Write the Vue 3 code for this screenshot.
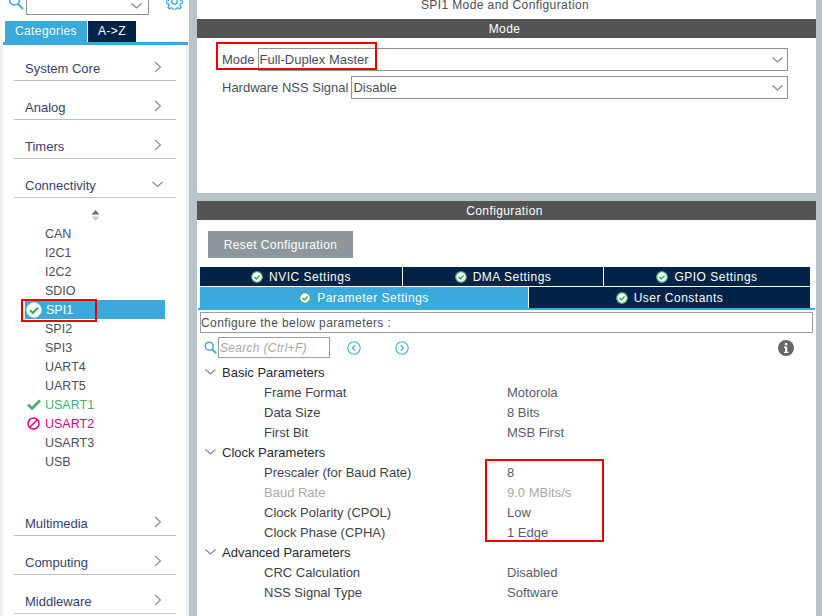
<script setup>
const topCats = ['System Core', 'Analog', 'Timers']
const bottomCats = ['Multimedia', 'Computing', 'Middleware']
const items = [
  { name: 'CAN' }, { name: 'I2C1' }, { name: 'I2C2' }, { name: 'SDIO' },
  { name: 'SPI1', state: 'active' }, { name: 'SPI2' }, { name: 'SPI3' },
  { name: 'UART4' }, { name: 'UART5' }, { name: 'USART1', state: 'ok' },
  { name: 'USART2', state: 'blocked' }, { name: 'USART3' }, { name: 'USB' }
]
const tabsTop = ['NVIC Settings', 'DMA Settings', 'GPIO Settings']
const groups = [
  { title: 'Basic Parameters', rows: [
    ['Frame Format', 'Motorola'], ['Data Size', '8 Bits'], ['First Bit', 'MSB First']
  ] },
  { title: 'Clock Parameters', rows: [
    ['Prescaler (for Baud Rate)', '8'], ['Baud Rate', '9.0 MBits/s', true],
    ['Clock Polarity (CPOL)', 'Low'], ['Clock Phase (CPHA)', '1 Edge']
  ] },
  { title: 'Advanced Parameters', rows: [
    ['CRC Calculation', 'Disabled'], ['NSS Signal Type', 'Software']
  ] }
]
</script>

<template>
  <div class="app">
    <aside class="side">
      <div class="side-top">
        <svg class="s-ico" width="16" height="16" viewBox="0 0 16 16"><circle cx="6.5" cy="6" r="5" fill="none" stroke="#3ea9dc" stroke-width="1.6"/><path d="M10 10l5 5" stroke="#3ea9dc" stroke-width="2"/></svg>
        <div class="side-select">
          <svg width="11" height="6" viewBox="0 0 11 6"><path d="M.5.5l5 4.5 5-4.5" fill="none" stroke="#7d858a" stroke-width="1.2"/></svg>
        </div>
        <svg class="gear" width="17" height="17" viewBox="0 0 24 24"><path d="M10.5 1.5h3l.7 3 2.3 1 2.6-1.6 2.1 2.1-1.6 2.6 1 2.3 3 .7v3l-3 .7-1 2.3 1.6 2.6-2.1 2.1-2.6-1.6-2.3 1-.7 3h-3l-.7-3-2.3-1-2.6 1.6-2.1-2.1 1.6-2.6-1-2.3-3-.7v-3l3-.7 1-2.3-1.6-2.6 2.1-2.1 2.6 1.6 2.3-1z" fill="none" stroke="#3ea9dc" stroke-width="1.9"/><circle cx="12" cy="12" r="3.8" fill="none" stroke="#3ea9dc" stroke-width="1.9"/></svg>
      </div>
      <div class="side-tabs">
        <div class="stab on">Categories</div>
        <div class="stab">A-&gt;Z</div>
      </div>
      <div class="side-body">
        <div v-for="c in topCats" :key="c" class="cat">
          <span>{{ c }}</span>
          <svg class="chev" width="8" height="12" viewBox="0 0 8 12"><path d="M1 1l5.5 5L1 11" fill="none" stroke="#858b90" stroke-width="1.1"/></svg>
        </div>
        <div class="cat">
          <span>Connectivity</span>
          <svg class="chev-d" width="11" height="7" viewBox="0 0 11 7"><path d="M.5 1l5 4.5 5-4.5" fill="none" stroke="#858b90" stroke-width="1.1"/></svg>
        </div>
        <div class="sort">
          <svg width="9" height="11" viewBox="0 0 9 11"><path d="M4.5 0L8.5 4.5H.5z" fill="#666c70"/><path d="M4.5 11L8.5 6.5H.5z" fill="#c9cdd0"/></svg>
        </div>
        <ul class="items">
          <li v-for="i in items" :key="i.name" class="item" :class="i.state">
            <span class="mark">
              <svg v-if="i.state === 'active'" width="16" height="16" viewBox="0 0 18 18"><circle cx="9" cy="9" r="8.4" fill="#fff" stroke="#bfe3cd"/><path d="M4.5 9.2l3.2 3.2 5.8-6" fill="none" stroke="#36a768" stroke-width="2.4"/></svg>
              <svg v-else-if="i.state === 'ok'" width="14" height="11" viewBox="0 0 14 11"><path d="M1 5.5l4 4 8-8" fill="none" stroke="#45ad72" stroke-width="2.6"/></svg>
              <svg v-else-if="i.state === 'blocked'" width="13" height="13" viewBox="0 0 13 13"><circle cx="6.5" cy="6.5" r="5.5" fill="none" stroke="#e6007e" stroke-width="1.5"/><path d="M2.8 10.2l7.4-7.4" stroke="#e6007e" stroke-width="1.5"/></svg>
            </span>
            <span class="iname">{{ i.name }}</span>
          </li>
        </ul>
        <div v-for="c in bottomCats" :key="c" class="cat">
          <span>{{ c }}</span>
          <svg class="chev" width="8" height="12" viewBox="0 0 8 12"><path d="M1 1l5.5 5L1 11" fill="none" stroke="#858b90" stroke-width="1.1"/></svg>
        </div>
      </div>
    </aside>

    <main class="main">
      <section class="mode">
        <div class="title">SPI1 Mode and Configuration</div>
        <div class="bar">Mode</div>
        <div class="form">
          <label class="frow">
            <span>Mode</span>
            <div class="sel">Full-Duplex Master
              <svg width="11" height="6" viewBox="0 0 11 6"><path d="M.5.5l5 4.5 5-4.5" fill="none" stroke="#7d858a" stroke-width="1.2"/></svg>
            </div>
          </label>
          <label class="frow">
            <span>Hardware NSS Signal</span>
            <div class="sel">Disable
              <svg width="11" height="6" viewBox="0 0 11 6"><path d="M.5.5l5 4.5 5-4.5" fill="none" stroke="#7d858a" stroke-width="1.2"/></svg>
            </div>
          </label>
        </div>
      </section>

      <section class="config">
        <div class="bar">Configuration</div>
        <button class="reset">Reset Configuration</button>
        <div class="tabs">
          <div class="trow three">
            <div v-for="t in tabsTop" :key="t" class="tab">
              <svg width="12" height="12" viewBox="0 0 12 12"><circle cx="6" cy="6" r="5.3" fill="#fff" stroke="#45ad72" stroke-width="1.2"/><path d="M3.4 6l1.9 1.9 3.3-3.4" fill="none" stroke="#36a768" stroke-width="1.5"/></svg>
              {{ t }}
            </div>
          </div>
          <div class="trow two">
            <div class="tab blue">
              <svg width="12" height="12" viewBox="0 0 12 12"><circle cx="6" cy="6" r="5.3" fill="#fff" stroke="#45ad72" stroke-width="1.2"/><path d="M3.4 6l1.9 1.9 3.3-3.4" fill="none" stroke="#36a768" stroke-width="1.5"/></svg>
              Parameter Settings
            </div>
            <div class="tab">
              <svg width="12" height="12" viewBox="0 0 12 12"><circle cx="6" cy="6" r="5.3" fill="#fff" stroke="#45ad72" stroke-width="1.2"/><path d="M3.4 6l1.9 1.9 3.3-3.4" fill="none" stroke="#36a768" stroke-width="1.5"/></svg>
              User Constants
            </div>
          </div>
        </div>
        <div class="pbody">
          <div class="hint">Configure the below parameters :</div>
          <div class="searchrow">
            <svg width="13" height="13" viewBox="0 0 13 13"><circle cx="5.2" cy="5.2" r="4" fill="none" stroke="#3ea9dc" stroke-width="1.5"/><path d="M8 8l4.3 4.3" stroke="#3ea9dc" stroke-width="1.8"/></svg>
            <div class="search">Search (Ctrl+F)</div>
            <svg class="nav-a" width="14" height="14" viewBox="0 0 14 14"><circle cx="7" cy="7" r="6.2" fill="none" stroke="#3ea9dc" stroke-width="1.1"/><path d="M8.2 4.2L5.4 7l2.8 2.8" fill="none" stroke="#3ea9dc" stroke-width="1.2"/></svg>
            <svg class="nav-b" width="14" height="14" viewBox="0 0 14 14"><circle cx="7" cy="7" r="6.2" fill="none" stroke="#3ea9dc" stroke-width="1.1"/><path d="M5.8 4.2L8.6 7l-2.8 2.8" fill="none" stroke="#3ea9dc" stroke-width="1.2"/></svg>
            <svg class="info" width="16" height="16" viewBox="0 0 16 16"><circle cx="8" cy="8" r="8" fill="#666"/><rect x="6.9" y="3" width="2.4" height="2.3" fill="#fff"/><path d="M6 6.6h3.2v5.2H10.4v1.3H6v-1.3h1v-3.9H6z" fill="#fff"/></svg>
          </div>
          <div class="tree">
            <template v-for="g in groups" :key="g.title">
              <div class="ghead">
                <svg width="11" height="6" viewBox="0 0 11 6"><path d="M.5.5l5 4.5 5-4.5" fill="none" stroke="#7d858a" stroke-width="1.1"/></svg>
                <span>{{ g.title }}</span>
              </div>
              <div v-for="r in g.rows" :key="r[0]" class="prow" :class="{ off: r[2] }">
                <span class="pname">{{ r[0] }}</span>
                <span class="pval">{{ r[1] }}</span>
              </div>
            </template>
          </div>
        </div>
      </section>
    </main>

    <div class="mark-box box-spi"></div>
    <div class="mark-box box-mode"></div>
    <div class="mark-box box-params"></div>
  </div>
</template>

<style scoped>
.app {
  position: relative;
  display: flex;
  width: 822px;
  height: 616px;
  overflow: hidden;
  background: #b8c4cc;
  font-family: "Liberation Sans", Arial, sans-serif;
  font-size: 13px;
  color: #4a4a55;
}

/* Sidebar */
.side {
  width: 189px;
  flex: none;
  background: #fff;
  display: flex;
  flex-direction: column;
}
.side-top {
  height: 21px;
  display: flex;
  align-items: flex-start;
  flex: none;
}
.s-ico { margin: -6px 0 0 8px; flex: none; }
.side-select {
  width: 123px;
  height: 15px;
  margin-left: 2px;
  box-sizing: border-box;
  border: 1px solid #8d9499;
  border-top: none;
  display: flex;
  justify-content: flex-end;
  padding: 3px 6px 0 0;
  flex: none;
}
.side-select svg { display: block; }
.gear { margin: -7px 0 0 17px; flex: none; }
.side-tabs {
  height: 24px;
  box-sizing: border-box;
  margin-left: 3px;
  padding-left: 2px;
  border-bottom: 3px solid #3aa9dc;
  margin-right: 1px;
  display: flex;
  gap: 1px;
  flex: none;
}
.stab {
  width: 48px;
  height: 21px;
  background: #012348;
  color: #fff;
  font-size: 12px;
  letter-spacing: 0.4px;
  line-height: 21px;
  text-align: center;
}
.stab.on { width: 82px; background: #3aa9dc; }
.side-body {
  flex: 1;
  background: #fff;
  border-left: 3px solid #eff1f2;
  border-right: 3px solid #eff1f2;
  padding: 0 10px 0 11px;
  min-height: 0;
}
.cat {
  padding-top: 3px;
  box-sizing: content-box;
  border-bottom: 1px solid #b9c3ca;
  height: 35px;
  display: flex;
  justify-content: space-between;
  align-items: flex-end;
  color: #39406b;
  font-size: 13px;
}
.side-body > .cat:first-child { margin-top: -3px; }
.cat span { padding-bottom: 3px; line-height: 16px; margin-left: 11px; }
.chev { margin: 0 14px 7px 0; }
.chev-d { margin: 0 13px 9px 0; }
.sort {
  height: 26px;
  display: flex;
  justify-content: center;
  align-items: center;
  padding-top: 11px;
  box-sizing: border-box;
  width: 162px;
}
.sort svg { margin-top: -2px; }
.items {
  list-style: none;
  margin: 0 0 26px;
  padding: 0;
}
.item {
  height: 19px;
  line-height: 19px;
  margin-left: 11px;
  width: 140px;
  display: flex;
  align-items: center;
  font-size: 12.5px;
  color: #4d4d57;
}
.iname { padding-top: 1px; }
.mark {
  width: 17px;
  margin-right: 3px;
  flex: none;
  display: flex;
  justify-content: center;
  align-items: center;
  height: 19px;
}
.mark svg { flex: none; }
.item.active { background: #3aa9dc; color: #fff; }
.item.active .iname { margin-left: 1px; }
.item.ok { color: #45ad72; }
.item.blocked { color: #e6007e; }

/* Main */
.main {
  margin-left: 8px;
  width: 619px;
  flex: none;
  display: flex;
  flex-direction: column;
  gap: 8px;
}
.mode {
  height: 193px;
  background: #fff;
  flex: none;
}
.title {
  height: 19px;
  line-height: 10px;
  text-align: center;
  font-size: 12px;
  letter-spacing: 0.4px;
  color: #4d4d57;
  padding-right: 3px;
  box-sizing: border-box;
}
.bar {
  height: 19px;
  box-sizing: border-box;
  background: #535453;
  color: #fff;
  font-size: 12px;
  letter-spacing: 0.4px;
  padding: 1px 4px 0 0;
  line-height: 19px;
  text-align: center;
}
.form {
  padding: 10px 28px 0 25px;
  display: flex;
  flex-direction: column;
  gap: 5px;
}
.frow {
  display: flex;
  align-items: center;
  gap: 3px;
  height: 23px;
  color: #4d4d57;
}
.sel {
  flex: 1;
  height: 23px;
  box-sizing: border-box;
  border: 1px solid #8d9499;
  line-height: 21px;
  padding: 0 4px 0 1px;
  display: flex;
  justify-content: space-between;
  align-items: center;
}
.config {
  flex: 1;
  background: #fff;
  min-height: 0;
}
.reset {
  display: block;
  margin: 11px 0 9px 11px;
  width: 145px;
  height: 27px;
  border: none;
  background: #8f979c;
  color: #fff;
  font: 12px "Liberation Sans", Arial, sans-serif;
  letter-spacing: 0.4px;
}
.tabs {
  margin: 0 6px 0 3px;
  display: flex;
  flex-direction: column;
  gap: 1px;
}
.trow { display: grid; gap: 1px; }
.three { grid-template-columns: 202px 200px 1fr; height: 19px; }
.two { grid-template-columns: 328px 1fr; height: 21px; }
.tab {
  background: #012348;
  color: #fff;
  font-size: 12px;
  letter-spacing: 0.5px;
  display: flex;
  align-items: center;
  justify-content: center;
  gap: 6px;
}
.tab.blue { background: #3aa9dc; }
.pbody {
  border-top: 2px solid #3aa9dc;
  margin: 0 1px;
  padding: 2px 2px 0;
  height: 306px;
  box-sizing: border-box;
}
.hint {
  height: 21px;
  box-sizing: border-box;
  border: 1px solid #9a9fa3;
  font-size: 12px;
  letter-spacing: 0.4px;
  line-height: 20px;
  color: #4d4d57;
  white-space: nowrap;
}
.searchrow {
  display: flex;
  align-items: center;
  height: 21px;
  margin-top: 4px;
  padding-left: 4px;
}
.search {
  width: 112px;
  height: 21px;
  box-sizing: border-box;
  margin-left: 1px;
  border: 1px solid #9a9fa3;
  font-style: italic;
  font-size: 12px;
  letter-spacing: 0.3px;
  color: #a8a8a8;
  line-height: 20px;
  padding-left: 1px;
}
.nav-a { margin-left: 17px; }
.nav-b { margin-left: 34px; }
.info { margin-left: 369px; }
.tree { margin-top: 4px; }
.ghead {
  height: 20px;
  display: flex;
  align-items: center;
  padding-left: 5px;
  gap: 6px;
  color: #2a2a33;
}
.prow {
  height: 20px;
  box-sizing: border-box;
  padding: 1px 0 0 64px;
  line-height: 19px;
  display: flex;
}
.pname { width: 243px; color: #3f3f49; }
.pval { color: #5b5b6b; }
.prow.off .pname, .prow.off .pval { color: #a9a9a9; }

/* Red annotations drawn over the screenshot */
.mark-box {
  position: absolute;
  box-sizing: border-box;
  border: 2px solid #f00000;
}
.box-spi { left: 21px; top: 299px; width: 76px; height: 23px; }
.box-mode { left: 216px; top: 42px; width: 161px; height: 28px; }
.box-params { left: 485px; top: 459px; width: 119px; height: 83px; }
</style>
